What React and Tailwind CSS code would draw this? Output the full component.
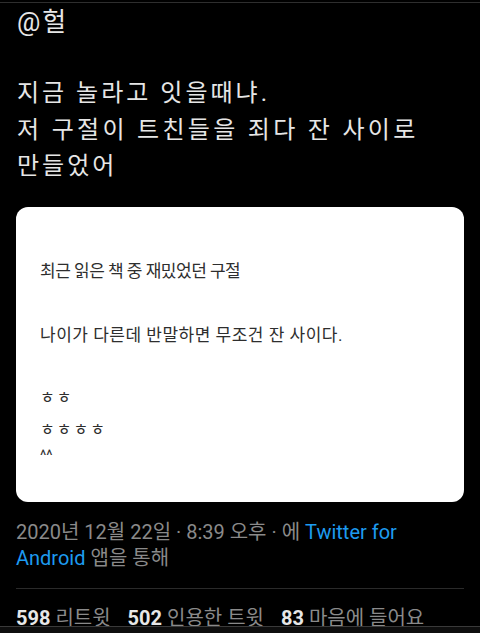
const font = { fontFamily: 'Roboto, "Noto Sans CJK KR", sans-serif' };

const Stat = ({ count, label }) => (
  <span className="mr-[17px]">
    <span className="font-bold text-[#e7e7e7]">{count}</span>
    <span className="text-[#8a8a8a]"> {label}</span>
  </span>
);

export default function App() {
  return (
    <div
      className="relative h-[633px] w-[480px] overflow-hidden bg-black"
      style={font}
    >
      <div className="mt-[2px] h-px bg-[#2e2e2e]" />
      <div className="px-[17px]">
        <p className="mt-[1px] text-[26px] leading-[36px] tracking-[2px] text-[#e6e6e6]">@헐</p>
        <p className="mt-[35px] text-[24px] leading-[36.5px] text-[#e6e6e6] tracking-[3px]">
          지금 놀라고 잇을때냐.
          <br />
          <span className="tracking-[3.3px]">저 구절이 트친들을 죄다 잔 사이로</span>
          <br />
          만들었어
        </p>
      </div>

      <div className="mx-4 mt-[22px] h-[295px] rounded-xl bg-white px-6 pt-[52px] text-[#2e2e2e]">
        <p className="text-[17px] leading-[24px] tracking-[-0.5px]">
          최근 읽은 책 중 재밌었던 구절
        </p>
        <p className="mt-10 text-[17px] leading-[24px] tracking-[0.5px]">
          나이가 다른데 반말하면 무조건 잔 사이다.
        </p>
        <p className="mt-[39px] text-[16px] leading-[24px] tracking-[2px]">ㅎㅎ</p>
        <p className="mt-[8px] text-[16px] leading-[24px] tracking-[2px]">ㅎㅎㅎㅎ</p>
        <p className="mt-[1px] text-[15px] leading-[24px]">^^</p>
      </div>

      <div className="px-4">
        <p className="mt-[17px] text-[20px] leading-[26px] text-[#8a8a8a]">
          2020년 12월 22일 · 8:39 오후 · 에{" "}
          <span className="text-[#1d9bf0]">Twitter for Android</span> 앱을 통해
        </p>
        <div className="mt-[17px] h-px bg-[#2a2a2a]" />
        <p className="mt-[16px] text-[20px] leading-[26px]">
          <Stat count="598" label="리트윗" />
          <Stat count="502" label="인용한 트윗" />
          <Stat count="83" label="마음에 들어요" />
        </p>
      </div>

      <div className="absolute bottom-0 left-0 right-0 h-[7px] border-t border-[#3a3a3a] bg-[#0e0e0e]" />
    </div>
  );
}
